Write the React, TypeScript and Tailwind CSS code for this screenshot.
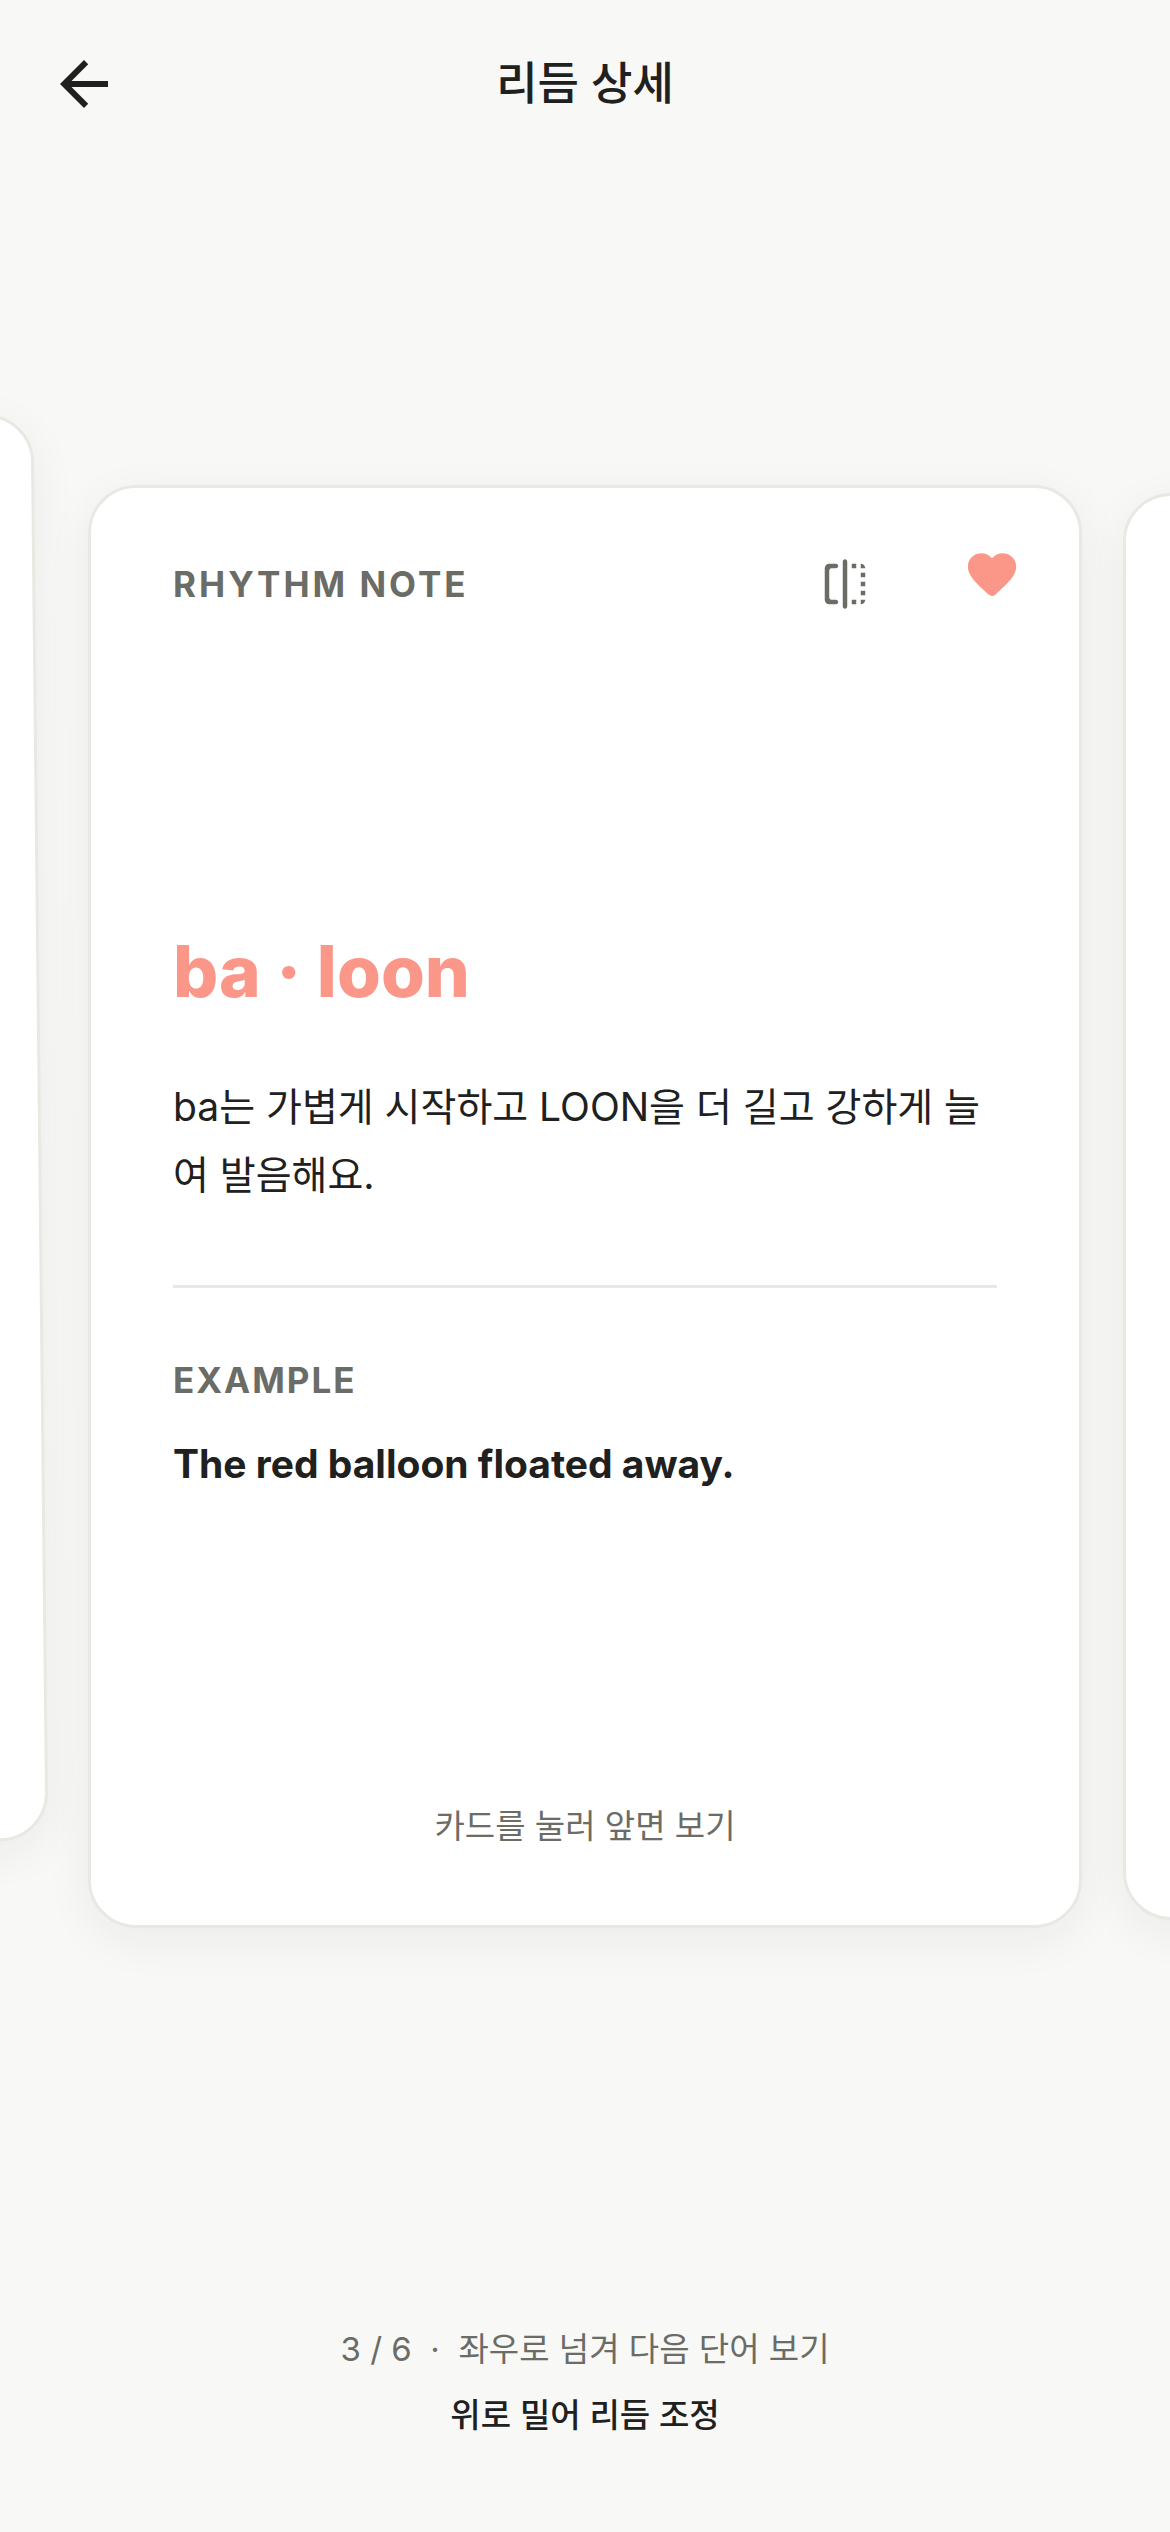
const SANS = "font-['Inter','Noto_Sans_CJK_KR',sans-serif]";

const note = {
  word: 'ba · loon',
  description: 'ba는 가볍게 시작하고 LOON을 더 길고 강하게 늘여 발음해요.',
  example: 'The red balloon floated away.',
};

function BackIcon() {
  return (
    <svg viewBox="0 0 24 24" className="size-[72px] fill-current" aria-hidden="true">
      <path d="M20 11H7.83l5.59-5.59L12 4l-8 8 8 8 1.41-1.41L7.83 13H20v-2z" />
    </svg>
  );
}

function FlipIcon() {
  return (
    <svg viewBox="0 0 24 24" className="size-[54px] fill-current" aria-hidden="true">
      <path d="M15 21h2v-2h-2v2zm4-12h2V7h-2v2zM3 5v14c0 1.1.9 2 2 2h3c.55 0 1-.45 1-1s-.45-1-1-1H6c-.55 0-1-.45-1-1V6c0-.55.45-1 1-1h2c.55 0 1-.45 1-1s-.45-1-1-1H5c-1.1 0-2 .9-2 2zm16-2v2h2c0-1.1-.9-2-2-2zm-7 20c.55 0 1-.45 1-1V2c0-.55-.45-1-1-1s-1 .45-1 1v20c0 .55.45 1 1 1zm7-6h2v-2h-2v2zM15 5h2V3h-2v2zm4 8h2v-2h-2v2zm0 8c1.1 0 2-.9 2-2h-2v2z" />
    </svg>
  );
}

function HeartIcon() {
  return (
    <svg viewBox="0 0 24 24" className="size-[58px] fill-current" aria-hidden="true">
      <path d="M13.35 20.13c-.76.69-1.93.69-2.69-.01l-.11-.1C5.3 15.27 1.87 12.16 2 8.28c.06-1.7.93-3.33 2.34-4.29 2.64-1.8 5.9-.96 7.66 1.1 1.76-2.06 5.02-2.91 7.66-1.1 1.41.96 2.28 2.59 2.34 4.29.14 3.88-3.3 6.99-8.55 11.76l-.1.09z" />
    </svg>
  );
}

const cardClass = 'w-[calc(100%-176px)] shrink-0 rounded-[48px] border-3 border-[#e9e9e3] bg-white shadow-[0_12px_48px_rgba(32,32,30,0.06)]';

export default function App() {
  return (
    <div className={`flex min-h-screen flex-col overflow-hidden bg-[#f8f8f6] text-[#20201e] ${SANS}`}>
      <header className="grid h-[168px] shrink-0 grid-cols-[72px_1fr_72px] items-center px-12">
        <button type="button" aria-label="뒤로"><BackIcon /></button>
        <h1 className="text-center text-[45px] font-medium">리듬 상세</h1>
      </header>

      <main className="flex flex-1 justify-center gap-[41px] pt-[317px] pb-[388px]">
        <div className={`${cardClass} my-2 -translate-x-[6px] -translate-y-[74px] -rotate-[0.6deg]`} />

        <article className={`${cardClass} flex flex-col px-[82px] pt-[58px] pb-[72px]`}>
          <div className="-mr-6 flex h-[76px] items-center">
            <h2 className="flex-1 text-[35px] font-bold tracking-[3px] text-[#6b6c66]">RHYTHM NOTE</h2>
            <button type="button" aria-label="카드 뒤집기" className="text-[#6b6c66]"><FlipIcon /></button>
            <button type="button" aria-label="즐겨찾기" className="ml-[91px] self-start text-[#fb9788]"><HeartIcon /></button>
          </div>

          <div className="flex flex-1 flex-col justify-center">
            <p className="text-[71px] leading-[96px] font-extrabold text-[#fb9788]">{note.word}</p>
            <p className="mt-[54px] text-[39px] leading-[68px] break-all">{note.description}</p>
            <hr className="mt-[76px] mb-[68px] border-t-3 border-[#e9e9e3]" />
            <h3 className="text-[35px] leading-[48px] font-bold tracking-[2px] text-[#6b6c66]">EXAMPLE</h3>
            <p className="mt-[26px] text-[39px] leading-[68px] font-bold">{note.example}</p>
          </div>

          <button type="button" className="text-[33px] leading-[54px] text-[#6b6c66]">카드를 눌러 앞면 보기</button>
        </article>

        <div className={`${cardClass} my-2`} />
      </main>

      <footer className="pb-[84px] text-center text-[33px] leading-[66px]">
        <p className="whitespace-pre text-[#6b6c66]">3 / 6  ·  좌우로 넘겨 다음 단어 보기</p>
        <p className="font-medium">위로 밀어 리듬 조정</p>
      </footer>
    </div>
  );
}
